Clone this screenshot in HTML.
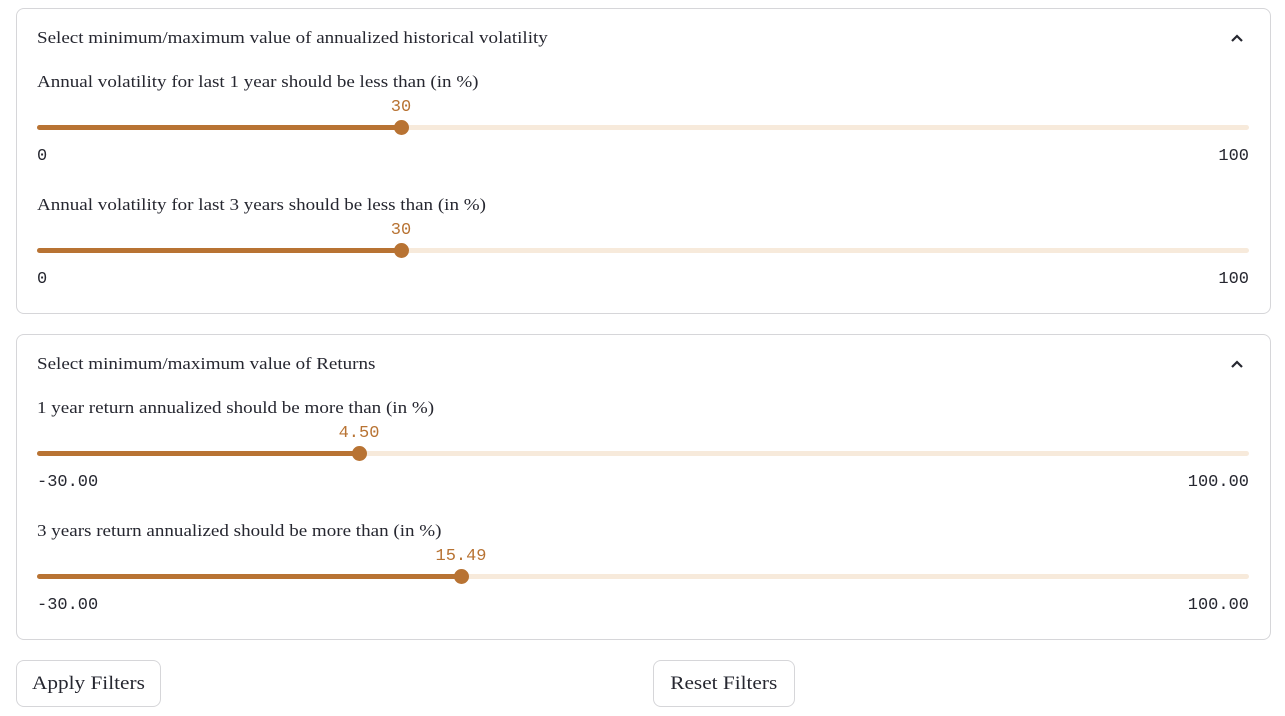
<!DOCTYPE html>
<html><head><style>
body{margin:0;width:1285px;height:716px;background:#fff;position:relative;font-family:"Liberation Serif",serif;color:#262730;overflow:hidden}
.box{position:absolute;left:16px;width:1255px;height:306px;border:1px solid #d6d6d9;border-radius:8px;box-sizing:border-box}
.t{position:absolute;left:37px;font-size:17px;white-space:nowrap;line-height:20px;transform:scaleX(1.12);transform-origin:left center}
.chev{position:absolute;left:1230px;width:14px;height:10px}
.track{position:absolute;left:37px;width:1212px;height:5px;border-radius:3px;background:#f7eadb}
.fill{position:absolute;left:0;top:0;height:5px;border-radius:3px;background:#b87333}
.thumb{position:absolute;top:-5px;width:15px;height:15px;border-radius:50%;background:#b87333;margin-left:-7px}
.v{position:absolute;font-family:"Liberation Mono",monospace;font-size:17px;color:#b87333;transform:translateX(-50%);line-height:18px}
.m{position:absolute;font-family:"Liberation Mono",monospace;font-size:17px;color:#262730;line-height:18px}
.r{right:36px}
.btn{position:absolute;top:660px;height:47px;border:1px solid #d6d6d9;border-radius:8px;box-sizing:border-box;font-size:19px;line-height:45px;text-align:center;background:#fff}
.btn span{display:inline-block;transform:scaleX(1.12)}
</style></head><body>
<div class="box" style="top:8px"></div>
<div class="box" style="top:334px"></div>

<div class="t" style="top:28px">Select minimum/maximum value of annualized historical volatility</div>
<svg class="chev" style="top:33px" viewBox="0 0 14 10"><path d="M2 8 L7 3 L12 8" stroke="#262730" stroke-width="2.2" fill="none"/></svg>
<div class="t" style="top:72px">Annual volatility for last 1 year should be less than (in %)</div>
<div class="v" style="left:401px;top:99px">30</div>
<div class="track" style="top:125px"><div class="fill" style="width:364px"></div><div class="thumb" style="left:364px"></div></div>
<div class="m" style="left:37px;top:148px">0</div>
<div class="m r" style="top:148px">100</div>

<div class="t" style="top:195px">Annual volatility for last 3 years should be less than (in %)</div>
<div class="v" style="left:401px;top:222px">30</div>
<div class="track" style="top:248px"><div class="fill" style="width:364px"></div><div class="thumb" style="left:364px"></div></div>
<div class="m" style="left:37px;top:271px">0</div>
<div class="m r" style="top:271px">100</div>

<div class="t" style="top:354px">Select minimum/maximum value of Returns</div>
<svg class="chev" style="top:359px" viewBox="0 0 14 10"><path d="M2 8 L7 3 L12 8" stroke="#262730" stroke-width="2.2" fill="none"/></svg>
<div class="t" style="top:398px">1 year return annualized should be more than (in %)</div>
<div class="v" style="left:359px;top:425px">4.50</div>
<div class="track" style="top:451px"><div class="fill" style="width:322px"></div><div class="thumb" style="left:322px"></div></div>
<div class="m" style="left:37px;top:474px">-30.00</div>
<div class="m r" style="top:474px">100.00</div>

<div class="t" style="top:521px">3 years return annualized should be more than (in %)</div>
<div class="v" style="left:461px;top:548px">15.49</div>
<div class="track" style="top:574px"><div class="fill" style="width:424px"></div><div class="thumb" style="left:424px"></div></div>
<div class="m" style="left:37px;top:597px">-30.00</div>
<div class="m r" style="top:597px">100.00</div>

<div class="btn" style="left:16px;width:145px"><span>Apply Filters</span></div>
<div class="btn" style="left:653px;width:142px"><span>Reset Filters</span></div>
</body></html>
